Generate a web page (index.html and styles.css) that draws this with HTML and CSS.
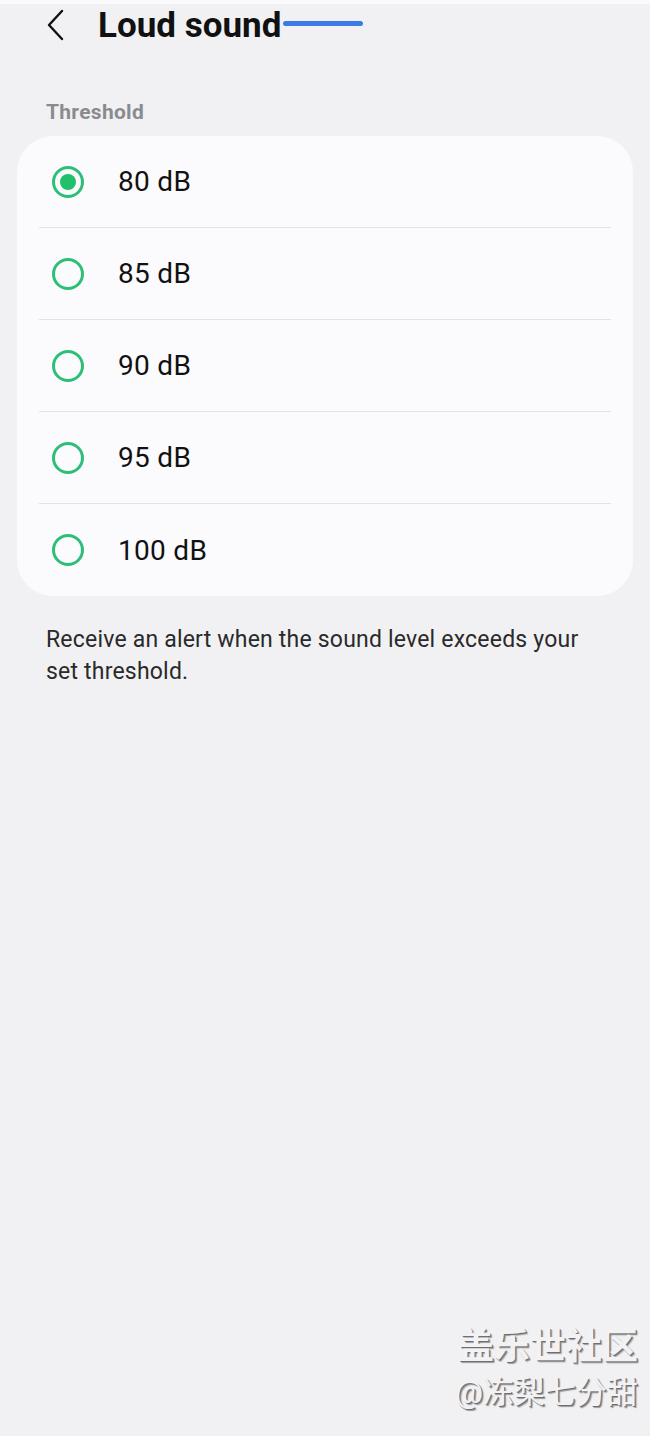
FILE: index.html
```html
<!DOCTYPE html>
<html lang="en">
<head>
  <meta charset="UTF-8" />
  <meta name="viewport" content="width=device-width, initial-scale=1.0"/>
  <title>Loud sound</title>
  <link rel="stylesheet" href="styles.css">
</head>
<body>

  <div class="screen">
    <div class="topbar">
      <button class="back" aria-label="Back">
        <svg width="20" height="32" viewBox="0 0 20 32"><path d="M16 2 L3 16 L16 30" fill="none" stroke="#111" stroke-width="2.4" stroke-linecap="round" stroke-linejoin="round"/></svg>
      </button>
      <h1>Loud sound</h1>
      <span class="underline"></span>
    </div>

    <div class="label">Threshold</div>

    <div class="card">
      <label class="option">
        <span class="radio checked"></span>
        <span class="value">80 dB</span>
      </label>
      <label class="option">
        <span class="radio"></span>
        <span class="value">85 dB</span>
      </label>
      <label class="option">
        <span class="radio"></span>
        <span class="value">90 dB</span>
      </label>
      <label class="option">
        <span class="radio"></span>
        <span class="value">95 dB</span>
      </label>
      <label class="option">
        <span class="radio"></span>
        <span class="value">100 dB</span>
      </label>
    </div>

    <p class="note">Receive an alert when the sound level exceeds your set threshold.</p>

    <div class="watermark">
      <div class="wm-big">盖乐世社区</div>
      <div class="wm-small">@冻梨七分甜</div>
    </div>
  </div>

</body>
</html>
```

FILE: styles.css
```css
body {
  margin: 0;
  padding: 0;
  font-family: Roboto, "Noto Sans CJK SC", sans-serif;
  background: #f1f1f4;
  color: #111;
}

.screen {
  height: 1436px;
  display: flex;
  flex-direction: column;
  box-sizing: border-box;
  border-top: 4px solid #fafafc;
}

.topbar {
  display: flex;
  align-items: center;
  height: 42px;
  padding-left: 46px;
}

.back {
  background: none;
  border: none;
  padding: 0;
  width: 20px;
  height: 32px;
  margin-right: 32px;
}

h1 {
  margin: 0;
  font-size: 35px;
  font-weight: 700;
  letter-spacing: 0;
}

.underline {
  width: 80px;
  height: 5px;
  border-radius: 3px;
  background: #3a7be8;
  margin-top: -3px;
  margin-left: 2px;
}

.label {
  margin: 53px 0 0 46px;
  font-size: 21px;
  font-weight: 700;
  color: #8b8b8d;
  line-height: 26px;
  letter-spacing: 0.3px;
}

.card {
  margin: 11px 17px 0;
  background: #fbfbfd;
  border-radius: 36px;
  padding: 0 22px;
}

.option {
  display: flex;
  align-items: center;
  height: 92px;
  box-sizing: border-box;
  border-bottom: 1px solid #e3e3e6;
}

.option:last-child {
  border-bottom: none;
}

.radio {
  width: 26px;
  height: 26px;
  border: 3px solid #2dbf78;
  border-radius: 50%;
  margin-left: 13px;
  margin-right: 34px;
  box-sizing: content-box;
  position: relative;
}

.radio.checked::after {
  content: "";
  position: absolute;
  left: 5px;
  top: 5px;
  width: 16px;
  height: 16px;
  border-radius: 50%;
  background: #22c06a;
}

.value {
  font-size: 28px;
  letter-spacing: 0.3px;
  color: #111;
}

.note {
  margin: 28px 46px 0;
  font-size: 23px;
  line-height: 32px;
  letter-spacing: 0.2px;
  color: #2a2a2a;
}

.watermark {
  margin-top: auto;
  margin-bottom: 20px;
  align-self: flex-end;
  padding-right: 12px;
  text-align: right;
  color: #f2f2f4;
  text-shadow: 1px 1px 0 #6f6f72, 2px 2px 1px #9a9a9c;
}

.wm-big {
  font-size: 36px;
  font-weight: 700;
  line-height: 46px;
}

.wm-small {
  font-size: 31px;
  line-height: 46px;
}
```
